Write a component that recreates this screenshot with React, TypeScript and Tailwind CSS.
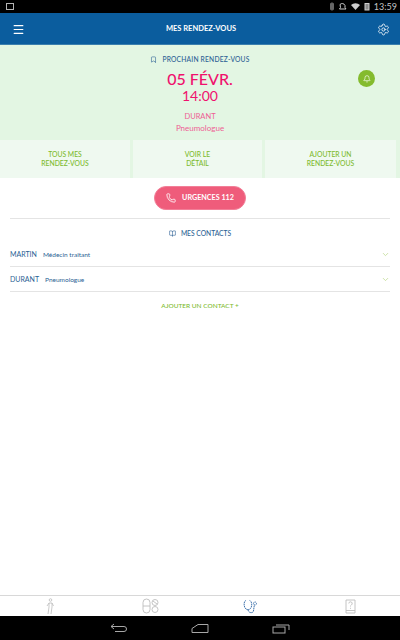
import { Bell, BookOpen, Bookmark, ChevronDown, Menu, Phone, Settings } from "lucide-react"

const font = { fontFamily: "Lato, sans-serif" }

const StatusBar = () => (
  <div className="h-[13px] bg-black flex items-center justify-between pl-[6px] pr-[3px] text-[#b4b4b4]">
    <div className="w-[8px] h-[7px] border border-[#b4b4b4]" />
    <div className="flex items-center gap-[3px]">
      <svg width="42" height="9" viewBox="0 0 42 9" fill="none" stroke="#999" strokeWidth="1">
        <rect x="1.5" y="1" width="3" height="7" rx="1" fill="#666" stroke="#666" />
        <path d="M11 2.5a3 3 0 0 1 5 1v2l1 1.5h-6.500l1-1.500z" fill="none" stroke="#ccc" />
        <path d="M22 3l4.500 5 4.500-5a6.500 6.500 0 0 0-9 0z" fill="#ccc" stroke="none" />
        <rect x="36" y="1.500" width="4" height="6.500" fill="#888" stroke="#ccc" />
      </svg>
      <span className="text-[9px] leading-none text-[#c4c4c4]">13:59</span>
    </div>
  </div>
)

const Header = () => (
  <div className="h-[32px] bg-[#0b5d9e] border-b border-[#3b7fae] flex items-center justify-between pl-[12px] pr-[10px] pt-[1px] text-white">
    <Menu size={13} strokeWidth={2.2} />
    <span className="text-[7.500px] font-bold">MES RENDEZ-VOUS</span>
    <Settings size={13} strokeWidth={1.500} />
  </div>
)

const Next = () => (
  <div className="bg-[#e3f6e3] relative">
    <div className="h-[95px] pt-[9px] flex flex-col items-center">
      <div className="flex items-center gap-[5px] text-[#2b5f94] h-[10px]">
        <Bookmark size={7} />
        <span className="text-[6.700px] font-medium tracking-[0.2px]">PROCHAIN RENDEZ-VOUS</span>
      </div>
      <div className="text-[#f0116d] text-[16px] leading-[17px] mt-[6px] font-medium">05 FÉVR.</div>
      <div className="text-[#f0116d] text-[14px] leading-[15px] mt-[1px]">14:00</div>
      <div className="text-[#ee5f94] text-[7.500px] leading-[10px] mt-[9px]">DURANT</div>
      <div className="text-[#ee5f94] text-[8px] leading-[10px] mt-[1px]">Pneumologue</div>
    </div>
    <div className="absolute left-[358px] top-[25px] w-[17px] h-[17px] rounded-full bg-[#84bb2e] flex items-center justify-center">
      <Bell size={8} color="white" />
    </div>
    <div className="flex gap-[3px] pr-[4px] h-[38px] text-[#7dbb2e] text-[6.800px] leading-[9px] font-medium">
      <div className="w-[130px] bg-[#eff9f0] flex items-center justify-center text-center">TOUS MES<br />RENDEZ-VOUS</div>
      <div className="w-[129px] bg-[#eff9f0] flex items-center justify-center text-center">VOIR LE<br />DÉTAIL</div>
      <div className="flex-1 bg-[#eff9f0] flex items-center justify-center text-center">AJOUTER UN<br />RENDEZ-VOUS</div>
    </div>
  </div>
)

const contacts = [
  { name: "MARTIN", role: "Médecin traitant" },
  { name: "DURANT", role: "Pneumologue" },
]

const Contacts = () => (
  <div className="flex-1 bg-white px-[10px]">
    <div className="flex justify-center pt-[8px] pb-[8px] border-b border-[#e4e4e4]">
      <div className="h-[24px] w-[92px] rounded-full bg-[#ef5c7b] border border-[#f27f98] text-white flex items-center justify-center gap-[6px]">
        <Phone size={10} />
        <span className="text-[7.200px] font-bold">URGENCES 112</span>
      </div>
    </div>
    <div className="flex items-center justify-center gap-[5px] h-[23px] pt-[5px] text-[#2b5f94]">
      <BookOpen size={7} />
      <span className="text-[6.700px] font-medium">MES CONTACTS</span>
    </div>
    {contacts.map((c) => (
      <div key={c.name} className="h-[25px] border-b border-[#e4e4e4] flex items-center justify-between text-[#2b5f94]">
        <div className="flex items-baseline gap-[6px]">
          <span className="text-[7px]">{c.name}</span>
          <span className="text-[6.500px]">{c.role}</span>
        </div>
        <ChevronDown size={9} className="text-[#bcd88c]" />
      </div>
    ))}
    <div className="text-center text-[#7dbb2e] text-[6.500px] font-medium mt-[9px]">AJOUTER UN CONTACT +</div>
  </div>
)

const TabBar = () => (
  <div className="h-[21px] bg-white border-t border-[#d8d8d8] grid grid-cols-4">
    <div className="flex items-center justify-center">
      <svg width="10" height="17" viewBox="0 0 10 17" fill="none" stroke="#bdbdbd" strokeWidth="0.8">
        <circle cx="5.500" cy="2" r="1.300" />
        <path d="M2 8l2-3h3l1.500 3M4 5v4l-1 7M7 5v4l-1 7" />
      </svg>
    </div>
    <div className="flex items-center justify-center">
      <svg width="17" height="16" viewBox="0 0 17 16" fill="none" stroke="#bdbdbd" strokeWidth="0.9">
        <rect x="1" y="1" width="7" height="14" rx="3.500" />
        <path d="M1 8h7" />
        <circle cx="13" cy="4.500" r="3" />
        <circle cx="13" cy="11.500" r="3" />
        <path d="M11 3l4 3" />
      </svg>
    </div>
    <div className="flex items-center justify-center">
      <svg width="15" height="15" viewBox="0 0 15 15" fill="none" stroke="#3f73ad" strokeWidth="1" strokeDasharray="1.500 0.500">
        <path d="M3 1.500C0.500 2 0.500 8 3 10c1.500 1 3 1 4.500-.5C9.500 7 9 2 6.500 1.500" />
        <path d="M5 10.500c0 3 3.500 4 5 2.500 1-1 .5-4 1.500-7" />
        <circle cx="12" cy="4.500" r="1.500" />
      </svg>
    </div>
    <div className="flex items-center justify-center">
      <svg width="11" height="15" viewBox="0 0 11 15" fill="none" stroke="#bdbdbd" strokeWidth="0.9">
        <path d="M1 1h9v13H1zM1 11.500h9" />
        <path d="M3.800 4.500a1.700 1.700 0 1 1 2.500 1.500c-.6.400-.8.700-.8 1.500M5.500 8.800v1" />
      </svg>
    </div>
  </div>
)

const NavBar = () => (
  <div className="h-[24px] bg-black flex items-center justify-center gap-[63px]">
    <svg width="18" height="11" viewBox="0 0 18 11" fill="none" stroke="#a8a8a8" strokeWidth="1">
      <path d="M4 1L1 3.500 4 6M1 3.500h13a2.500 2.500 0 0 1 0 5H5" />
    </svg>
    <svg width="18" height="11" viewBox="0 0 18 11" fill="none" stroke="#a8a8a8" strokeWidth="1">
      <path d="M1 9.500V5.500L7 1.500h10v8z" />
    </svg>
    <svg width="18" height="11" viewBox="0 0 18 11" fill="none" stroke="#a8a8a8" strokeWidth="1">
      <rect x="1" y="4" width="12" height="6" />
      <path d="M4 2h13v5" />
    </svg>
  </div>
)

const App = () => (
  <div className="w-[400px] h-[640px] flex flex-col" style={font}>
    <StatusBar />
    <Header />
    <Next />
    <Contacts />
    <TabBar />
    <NavBar />
  </div>
)

export default App
